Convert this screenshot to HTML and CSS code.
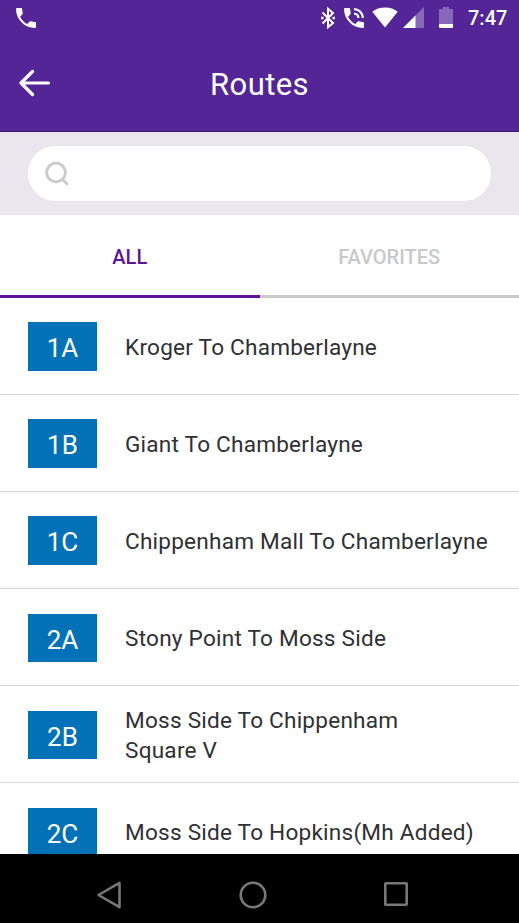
FILE: index.html
```
<!DOCTYPE html>
<html lang="en">
<head>
    <meta charset="UTF-8">
    <meta name="viewport" content="width=device-width, initial-scale=1.0">
    <title>Routes</title>
    <link rel="stylesheet" href="styles.css">
</head>
<body>
    <div class="screen">
        <header class="header">
            <div class="status-bar">
                <svg class="icon-call" width="20" height="20" viewBox="3 3 18 18">
                    <path fill="#fff" d="M6.62 10.79c1.44 2.83 3.76 5.14 6.59 6.59l2.2-2.2c.27-.27.67-.36 1.02-.24 1.12.37 2.33.57 3.57.57.55 0 1 .45 1 1V20c0 .55-.45 1-1 1C10.61 21 3 13.39 3 4c0-.55.45-1 1-1h3.5c.55 0 1 .45 1 1 0 1.25.2 2.45.57 3.57.11.35.03.74-.25 1.02l-2.2 2.2z"/>
                </svg>
                <div class="status-icons">
                    <svg class="icon-bluetooth" width="14" height="22" viewBox="0 0 14 22">
                        <path fill="none" stroke="#fff" stroke-width="2" d="M1.5 5.5 12 16 7 20.3V1.7L12 6 1.5 16.5"/>
                        <path fill="#fff" d="M0 9.800h2.500v2.400H0zM11.500 9.800H14v2.400h-2.500z"/>
                    </svg>
                    <svg class="icon-wifi-call" width="20" height="20" viewBox="3 3 18 18">
                        <path fill="#fff" d="M20 15.5c-1.25 0-2.45-.2-3.57-.57-.35-.11-.74-.03-1.02.24l-2.2 2.2c-2.83-1.44-5.15-3.75-6.59-6.58l2.2-2.21c.28-.27.36-.66.25-1.01C8.7 6.45 8.5 5.25 8.5 4c0-.55-.45-1-1-1H4c-.55 0-1 .45-1 1 0 9.39 7.61 17 17 17 .55 0 1-.45 1-1v-3.5c0-.55-.45-1-1-1z"/>
                        <path fill="none" stroke="#fff" stroke-width="2" d="M12 8a4 4 0 0 1 4 4M12 4a8 8 0 0 1 8 8"/>
                    </svg>
                    <svg class="icon-wifi" width="26" height="21" viewBox="0 0 26 21">
                        <path fill="#fff" d="M13 20.5.3 4.8C3.5 2 8 .5 13 .5s9.500 1.500 12.700 4.300z"/>
                    </svg>
                    <svg class="icon-signal" width="21" height="21" viewBox="0 0 21 21">
                        <path fill="#8667b8" d="M0 21 21 0v21z"/>
                        <path fill="#fff" d="M0 21 12.500 8.500V21z"/>
                    </svg>
                    <svg class="icon-battery" width="14" height="21" viewBox="0 0 14 21">
                        <path fill="#8667b8" d="M1 2h3V0h6v2h3a1 1 0 0 1 1 1v14H0V3a1 1 0 0 1 1-1z"/>
                        <path fill="#fff" d="M0 17h14v3a1 1 0 0 1-1 1H1a1 1 0 0 1-1-1z"/>
                    </svg>
                </div>
                <span class="time">7:47</span>
            </div>
            <div class="title-bar">
                <svg class="back" width="32" height="28" viewBox="0 0 32 28">
                    <path fill="none" stroke="#fff" stroke-width="3.200" stroke-linecap="round" stroke-linejoin="round" d="M13.500 2.500 2 14l11.500 11.500M2 14h27.500"/>
                </svg>
                <h1>Routes</h1>
            </div>
        </header>

        <div class="search">
            <div class="search-box">
                <svg width="26" height="26" viewBox="0 0 26 26">
                    <circle cx="12" cy="11.500" r="9.300" fill="none" stroke="#c9cac9" stroke-width="2.800"/>
                    <path stroke="#c9cac9" stroke-width="2.800" d="m17.500 17.500 6.300 6.300"/>
                </svg>
            </div>
        </div>

        <nav class="tabs">
            <div class="tab active">ALL</div>
            <div class="tab">FAVORITES</div>
        </nav>

        <main class="routes">
            <div class="route">
                <span class="badge">1A</span>
                <span class="name">Kroger To Chamberlayne</span>
            </div>
            <div class="route">
                <span class="badge">1B</span>
                <span class="name">Giant To Chamberlayne</span>
            </div>
            <div class="route">
                <span class="badge">1C</span>
                <span class="name">Chippenham Mall To Chamberlayne</span>
            </div>
            <div class="route">
                <span class="badge">2A</span>
                <span class="name">Stony Point To Moss Side</span>
            </div>
            <div class="route">
                <span class="badge">2B</span>
                <span class="name">Moss Side To Chippenham<br>Square V</span>
            </div>
            <div class="route">
                <span class="badge">2C</span>
                <span class="name">Moss Side To Hopkins(Mh Added)</span>
            </div>
        </main>

        <footer class="nav-bar">
            <svg width="26" height="30" viewBox="0 0 26 30">
                <path fill="none" stroke="#777" stroke-width="2.600" stroke-linejoin="round" d="M23.500 2.800v24.400L2.500 15z"/>
            </svg>
            <svg width="30" height="30" viewBox="0 0 30 30">
                <circle cx="15" cy="15" r="12.300" fill="none" stroke="#777" stroke-width="2.600"/>
            </svg>
            <svg class="recents" width="26" height="26" viewBox="0 0 26 26">
                <rect x="2.300" y="2.300" width="21.400" height="21.400" rx="0.500" fill="none" stroke="#777" stroke-width="2.600"/>
            </svg>
        </footer>
    </div>
</body>
</html>
```
FILE: styles.css
```
* {
    box-sizing: border-box;
}
body {
    margin: 0;
    font-family: Roboto, sans-serif;
    background: #fff;
}
svg {
    display: block;
    flex: none;
}
.screen {
    display: flex;
    flex-direction: column;
    height: 923px;
    overflow: hidden;
}
.header {
    flex: none;
    height: 132px;
    background: #532596;
    border-bottom: 1px solid #45107e;
    color: #fff;
}
.status-bar {
    display: flex;
    align-items: center;
    height: 35px;
    padding: 0 11px 0 16px;
}
.status-icons {
    display: flex;
    align-items: center;
    margin-left: auto;
}
.icon-wifi-call {
    margin-left: 9px;
}
.icon-wifi {
    margin-left: 8px;
}
.icon-signal {
    margin-left: 5px;
}
.icon-battery {
    margin-left: 15px;
}
.time {
    margin-left: 15px;
    width: 40px;
    font-size: 20px;
    font-weight: 500;
    line-height: 36px;
}
.title-bar {
    display: grid;
    grid-template-columns: 32px 1fr 32px;
    align-items: center;
    height: 96px;
    padding: 0 19px;
}
.title-bar h1 {
    margin: 2px 0 0;
    font-size: 31px;
    font-weight: 400;
    letter-spacing: 0.4px;
    text-align: center;
}
.search {
    flex: none;
    height: 83px;
    padding: 14px 28px;
    background: #eae6ee;
}
.search-box {
    display: flex;
    align-items: center;
    height: 55px;
    padding-left: 16px;
    border-radius: 28px;
    background: #fff;
}
.tabs {
    display: flex;
    flex: none;
    height: 83px;
}
.tab {
    flex: 1;
    border-bottom: 3px solid #c9c9c9;
    color: #c9c9c9;
    font-size: 20px;
    font-weight: 500;
    line-height: 85px;
    text-align: center;
}
.tab.active {
    border-color: #5b1399;
    color: #5b1399;
}
.routes {
    flex: 1;
    min-height: 0;
    overflow: hidden;
}
.route {
    display: flex;
    align-items: center;
    gap: 28px;
    height: 97.1px;
    padding: 1px 0 0 28px;
    border-bottom: 1px solid #d9d9db;
}
.badge {
    flex: none;
    width: 69px;
    height: 48.5px;
    background: #0272b8;
    color: #fff;
    font-size: 26px;
    line-height: 52px;
    text-align: center;
}
.name {
    color: #303034;
    font-size: 22.6px;
    letter-spacing: 0.22px;
    line-height: 30px;
    padding-top: 2.2px;
    white-space: nowrap;
}
.nav-bar {
    display: flex;
    flex: none;
    align-items: center;
    height: 69px;
    padding: 13px 0 0 96px;
    gap: 115.5px;
    background: #000;
}
.recents {
    margin-top: -2px;
}
```
